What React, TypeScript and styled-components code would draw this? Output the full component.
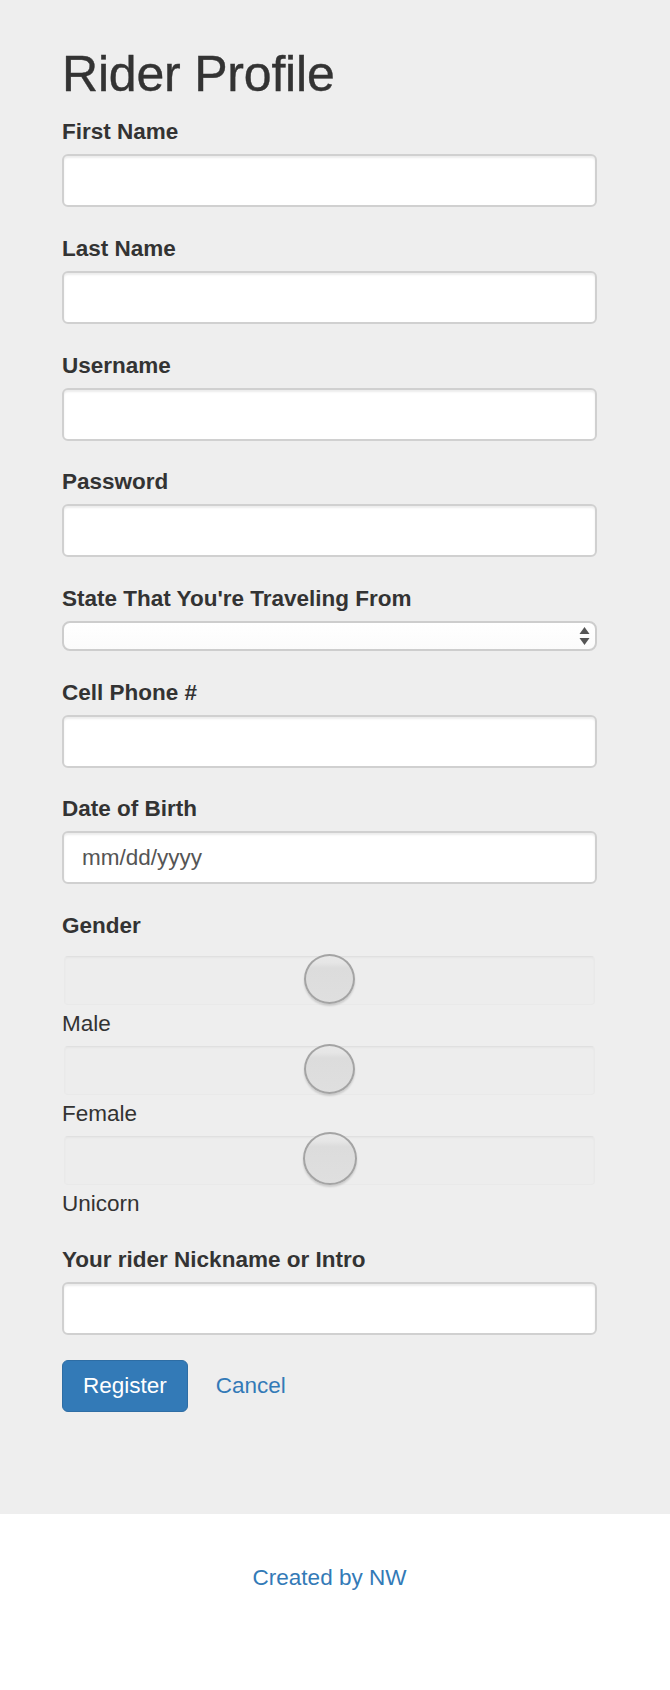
import React from "react";
import styled, { createGlobalStyle } from "styled-components";

const GlobalStyle = createGlobalStyle`
  html, body {
    margin: 0;
    padding: 0;
    background: #ffffff;
  }
  body {
    font-family: "Liberation Sans", Helvetica, Arial, sans-serif;
    color: #333333;
    font-size: 22.5px;
  }
  * { box-sizing: border-box; }
`;

const Page = styled.div`
  min-height: 1690px;
  background: #ffffff;
  display: flex;
  flex-direction: column;
`;

const Jumbotron = styled.section`
  background: #eeeeee;
  padding: 47.2px 0 102px;
`;

const Container = styled.div`
  padding: 0 73px 0 62px;
`;

const Title = styled.h1`
  margin: 0 0 15.2px;
  font-size: 50px;
  line-height: 55px;
  font-weight: 500;
  color: #333333;
  letter-spacing: -0.2px;
  -webkit-text-stroke: 0.4px #333333;
`;

const Form = styled.form`
  display: flex;
  flex-direction: column;
`;

const FormGroup = styled.div<{ $after?: number }>`
  display: flex;
  flex-direction: column;
  margin-bottom: ${(p) => (p.$after ?? 26.67)}px;
`;

const FieldLabel = styled.label`
  display: block;
  font-size: 22.5px;
  line-height: 30px;
  font-weight: 700;
  color: #333333;
  margin-bottom: 7px;
`;

const TextInput = styled.input`
  display: block;
  width: 100%;
  height: 53px;
  margin: 0;
  padding: 0 18px;
  font-family: "Liberation Sans", Helvetica, Arial, sans-serif;
  font-size: 22.5px;
  color: #555555;
  background: #ffffff;
  border: 2px solid #d0d0d0;
  border-radius: 6px;
  box-shadow: inset 0 2px 2px rgba(0, 0, 0, 0.075);
  outline: none;

  &::placeholder {
    color: #555555;
    opacity: 1;
  }
`;

const SelectWrap = styled.div`
  position: relative;
  width: 100%;
  height: 30px;
`;

const StateSelect = styled.select`
  display: block;
  width: 100%;
  height: 30px;
  margin: 0;
  padding: 0 36px 0 12px;
  appearance: none;
  -webkit-appearance: none;
  font-family: "Liberation Sans", Helvetica, Arial, sans-serif;
  font-size: 18px;
  color: #333333;
  background: linear-gradient(#ffffff, #fbfbfb);
  border: 2px solid #cdcdcd;
  border-radius: 8px;
  outline: none;
`;

const SelectArrows = styled.svg`
  position: absolute;
  right: 7px;
  top: 6px;
  width: 11px;
  height: 18px;
  pointer-events: none;
`;

const RadioList = styled.div`
  display: flex;
  flex-direction: column;
  gap: 6.6px;
  margin-top: 7.6px;
`;

const RadioOption = styled.div`
  display: flex;
  flex-direction: column;
`;

const RadioTrack = styled.div`
  height: 49px;
  margin: 0 2px;
  display: flex;
  align-items: center;
  justify-content: center;
  background: #ededed;
  border: 1px solid #e9e9e9;
  border-top-color: #e0e0e0;
  border-radius: 4px;
  box-shadow: inset 0 1px 2px rgba(0, 0, 0, 0.035);
`;

const RadioKnob = styled.span<{ $size: number }>`
  width: ${(p) => p.$size}px;
  height: ${(p) => p.$size - 1}px;
  margin-top: -3px;
  border-radius: 50%;
  border: 2px solid #a4a4a4;
  background: linear-gradient(
    to bottom,
    #e8e8e8 0%,
    #e6e6e6 14%,
    #dcdcdc 26%,
    #dfdfdf 100%
  );
  box-shadow: 0 2px 2px rgba(0, 0, 0, 0.14);
  flex-shrink: 0;
`;

const OptionLabel = styled.span`
  display: block;
  margin-top: 4.4px;
  font-size: 22.5px;
  line-height: 30px;
  font-weight: 400;
  color: #333333;
`;

const Actions = styled.div`
  display: flex;
  align-items: center;
`;

const PrimaryButton = styled.button`
  height: 52px;
  padding: 0 20px;
  font-family: "Liberation Sans", Helvetica, Arial, sans-serif;
  font-size: 22.5px;
  color: #ffffff;
  background: #337ab7;
  border: 1px solid #2e6da4;
  border-radius: 6px;
  cursor: pointer;
`;

const LinkButton = styled.a`
  margin-left: 28px;
  font-size: 22.5px;
  line-height: 30px;
  color: #337ab7;
  text-decoration: none;
  cursor: pointer;
`;

const Footer = styled.footer`
  flex: 1;
  background: #ffffff;
  padding: 49px 73px 0 62px;
  display: flex;
  justify-content: center;
`;

const FooterLink = styled.a`
  font-size: 22.5px;
  line-height: 30px;
  color: #337ab7;
  text-decoration: none;
`;

const textFields = [
  { id: "firstName", label: "First Name", type: "text" },
  { id: "lastName", label: "Last Name", type: "text" },
  { id: "username", label: "Username", type: "text" },
  { id: "password", label: "Password", type: "password" },
];

const states = [
  "Alabama", "Alaska", "Arizona", "Arkansas", "California", "Colorado",
  "Connecticut", "Delaware", "Florida", "Georgia", "Hawaii", "Idaho",
  "Illinois", "Indiana", "Iowa", "Kansas", "Kentucky", "Louisiana", "Maine",
  "Maryland", "Massachusetts", "Michigan", "Minnesota", "Mississippi",
  "Missouri", "Montana", "Nebraska", "Nevada", "New Hampshire", "New Jersey",
  "New Mexico", "New York", "North Carolina", "North Dakota", "Ohio",
  "Oklahoma", "Oregon", "Pennsylvania", "Rhode Island", "South Carolina",
  "South Dakota", "Tennessee", "Texas", "Utah", "Vermont", "Virginia",
  "Washington", "West Virginia", "Wisconsin", "Wyoming",
];

const genders = [
  { label: "Male", knob: 51 },
  { label: "Female", knob: 51 },
  { label: "Unicorn", knob: 54 },
];

export default function App() {
  return (
    <Page>
      <GlobalStyle />
      <Jumbotron>
        <Container>
          <Title>Rider Profile</Title>
          <Form onSubmit={(e) => e.preventDefault()}>
            {textFields.map((f) => (
              <FormGroup key={f.id}>
                <FieldLabel htmlFor={f.id}>{f.label}</FieldLabel>
                <TextInput id={f.id} type={f.type} />
              </FormGroup>
            ))}

            <FormGroup>
              <FieldLabel htmlFor="state">State That You're Traveling From</FieldLabel>
              <SelectWrap>
                <StateSelect id="state" defaultValue="">
                  <option value=""></option>
                  {states.map((s) => (
                    <option key={s} value={s}>
                      {s}
                    </option>
                  ))}
                </StateSelect>
                <SelectArrows viewBox="0 0 11 18" aria-hidden="true">
                  <path d="M5.5 0 L10.5 7 L0.5 7 Z" fill="#555555" />
                  <path d="M0.5 11 L10.5 11 L5.5 18 Z" fill="#555555" />
                </SelectArrows>
              </SelectWrap>
            </FormGroup>

            <FormGroup>
              <FieldLabel htmlFor="cell">Cell Phone #</FieldLabel>
              <TextInput id="cell" type="tel" />
            </FormGroup>

            <FormGroup>
              <FieldLabel htmlFor="dob">Date of Birth</FieldLabel>
              <TextInput id="dob" type="text" placeholder="mm/dd/yyyy" />
            </FormGroup>

            <FormGroup $after={26}>
              <FieldLabel as="span">Gender</FieldLabel>
              <RadioList>
                {genders.map((g) => (
                  <RadioOption key={g.label}>
                    <RadioTrack>
                      <RadioKnob $size={g.knob} />
                    </RadioTrack>
                    <OptionLabel>{g.label}</OptionLabel>
                  </RadioOption>
                ))}
              </RadioList>
            </FormGroup>

            <FormGroup $after={24.9}>
              <FieldLabel htmlFor="nickname">Your rider Nickname or Intro</FieldLabel>
              <TextInput id="nickname" type="text" />
            </FormGroup>

            <Actions>
              <PrimaryButton type="submit">Register</PrimaryButton>
              <LinkButton href="#">Cancel</LinkButton>
            </Actions>
          </Form>
        </Container>
      </Jumbotron>
      <Footer>
        <FooterLink href="#">Created by NW</FooterLink>
      </Footer>
    </Page>
  );
}
